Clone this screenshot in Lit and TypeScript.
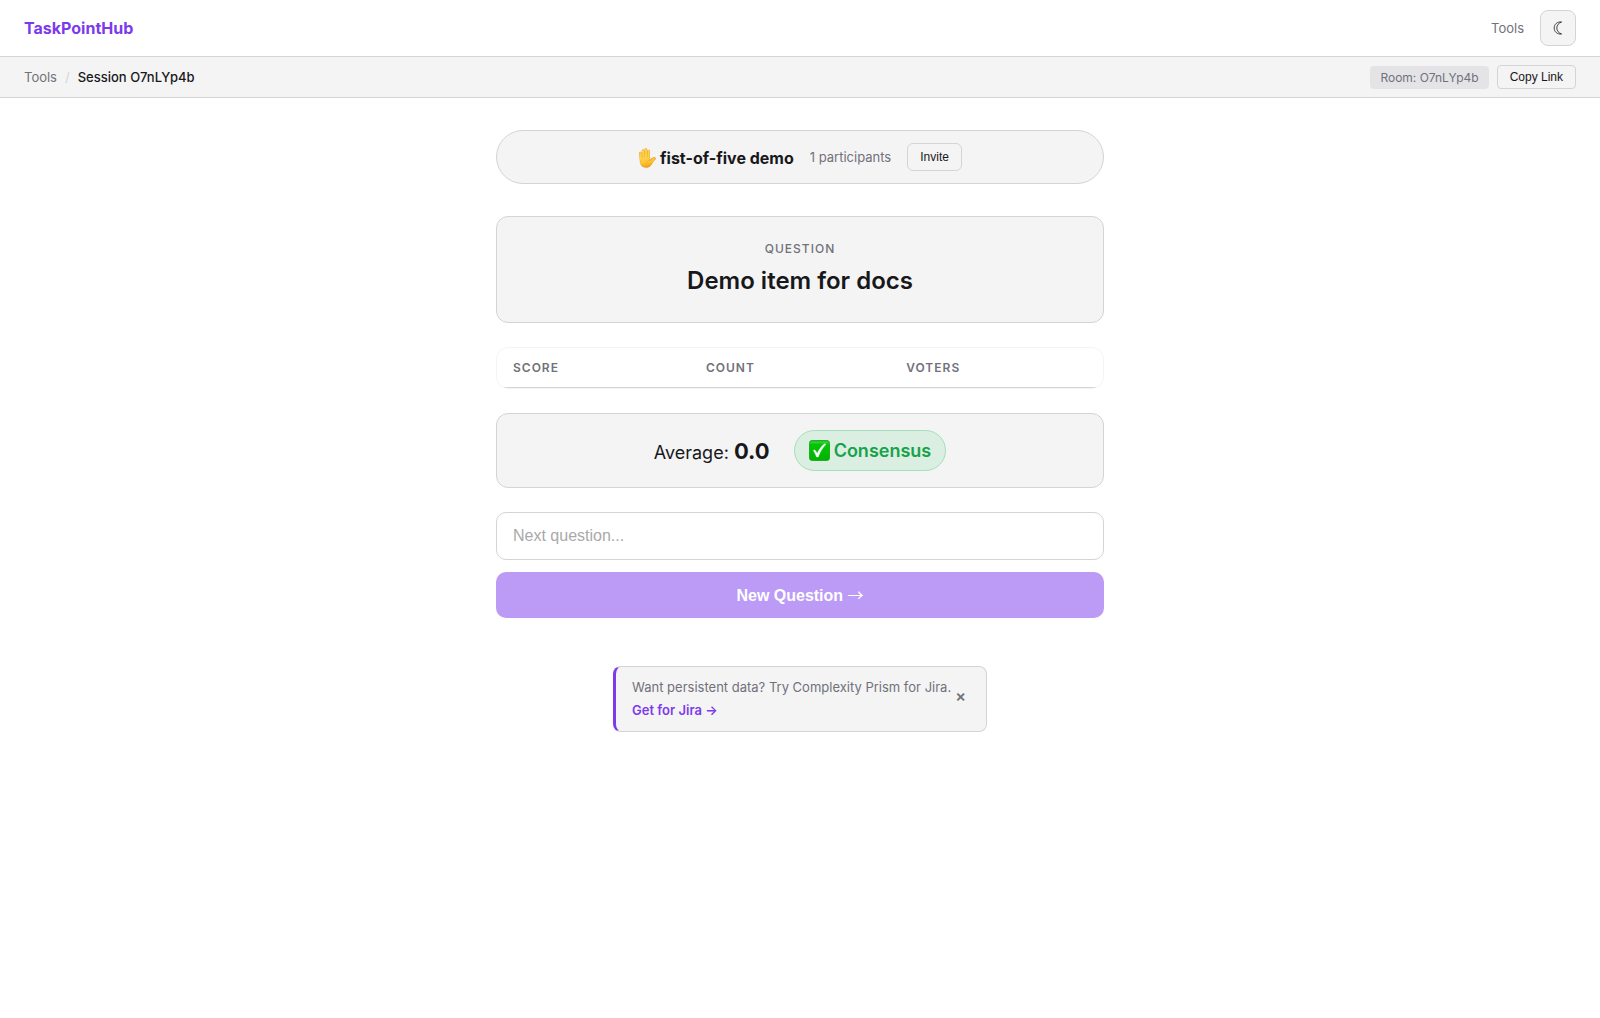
import { LitElement, html, css, svg } from "lit";
import { customElement, property, state } from "lit/decorators.js";

const handIcon = svg`
  <svg class="hand" viewBox="0 0 18 20" aria-hidden="true">
    <defs>
      <linearGradient id="skin" x1="0" y1="0" x2="0.3" y2="1">
        <stop offset="0" stop-color="#ffd24d"></stop>
        <stop offset="0.6" stop-color="#fcc52f"></stop>
        <stop offset="1" stop-color="#f0a01e"></stop>
      </linearGradient>
    </defs>
    <g fill="none" stroke="#e5a02a" stroke-linecap="round">
      <path d="M2.3 5.2 3.2 11M5 2.6 5.6 10M7.9 1.6V10M10.7 3 10.3 10" stroke-width="2.7"></path>
      <path d="M16.4 10.6C14.6 10.6 13.6 12.4 12.2 13.6" stroke-width="2.7"></path>
    </g>
    <path d="M2 9.5 11.6 9.2 12.2 12.4C13.4 11.6 14 10.4 15.4 9.7 16.6 9.2 17.8 9.9 17.3 10.9 15.6 12.6 14.6 15.2 12.8 17.4 11.2 19.6 8.2 19.9 5.6 19.1 2.4 18 1.9 14 2 9.5Z" fill="url(#skin)" stroke="#e09a25" stroke-width="0.5"></path>
    <g fill="none" stroke="#ffd04a" stroke-linecap="round" stroke-width="2.1">
      <path d="M2.3 5.2 3.2 11M5 2.6 5.6 10.5M7.9 1.6V10.5M10.7 3 10.3 10.5"></path>
    </g>
    <path d="M11.8 12C9.8 12.4 8.6 13.8 8.4 15.6" fill="none" stroke="#e9a52a" stroke-width="0.6"></path>
  </svg>`;

const checkIcon = svg`
  <svg class="check" viewBox="0 0 21 21" aria-hidden="true">
    <defs>
      <linearGradient id="leaf" x1="0" y1="0" x2="0" y2="1">
        <stop offset="0" stop-color="#0aa30f"></stop>
        <stop offset="0.08" stop-color="#35d63a"></stop>
        <stop offset="0.2" stop-color="#03c503"></stop>
        <stop offset="1" stop-color="#02b302"></stop>
      </linearGradient>
    </defs>
    <rect x="0.4" y="0.4" width="20.2" height="20.2" rx="3" fill="url(#leaf)" stroke="#0b9a12" stroke-width="0.8"></rect>
    <path d="M4.4 10.4 5.6 9.8C6.8 10.8 7.6 12 8.2 13.4 10 9.6 12.4 6.4 15.4 3.8L17 4.2C13.6 7.6 11 12 9.2 17H7.6C6.8 14.6 5.8 12.4 4.4 10.4Z" fill="#fff" stroke="#fff" stroke-width="0.4" stroke-linejoin="round"></path>
  </svg>`;

@customElement("site-header")
class SiteHeader extends LitElement {
  static styles = css`
    :host { display: block; }
    .bar {
      display: flex; align-items: center; justify-content: space-between;
      height: 56px; padding: 0 24px; border-bottom: 1px solid #d4d4d8; background: #fff;
    }
    a { text-decoration: none; }
    .brand { color: #7c3aed; font-size: 16px; font-weight: 700; }
    .nav { display: flex; align-items: center; gap: 16px; }
    .link { color: #71717a; font-size: 13px; }
    .theme {
      display: flex; align-items: center; justify-content: center; box-sizing: border-box;
      width: 36px; height: 36px; padding: 0; border: 1px solid #d4d4d8; border-radius: 8px;
      background: #f4f4f4; color: #18181b; cursor: pointer;
    }
    .moon { width: 10px; height: 14px; }
  `;
  render() {
    return html`
      <header class="bar">
        <a class="brand" href="#">TaskPointHub</a>
        <nav class="nav">
          <a class="link" href="#tools">Tools</a>
          <button class="theme" type="button" aria-label="Toggle theme">
            <svg class="moon" viewBox="0 0 10 14" aria-hidden="true">
              <path d="M8.6 1C4.4.6 1.2 3 1.2 7S4.4 13.4 8.6 13C5.8 12 3.8 10 3.8 7S5.8 2 8.6 1Z" fill="none" stroke="currentColor" stroke-width="0.8"></path>
            </svg>
          </button>
        </nav>
      </header>`;
  }
}

@customElement("session-bar")
class SessionBar extends LitElement {
  @property() room = "";
  static styles = css`
    :host { display: block; }
    .bar {
      display: flex; align-items: center; justify-content: space-between;
      height: 40px; padding: 0 24px; border-bottom: 1px solid #d4d4d8; background: #f4f4f4;
      font-size: 13px;
    }
    .crumbs, .actions { display: flex; align-items: center; gap: 8px; }
    .link { color: #71717a; text-decoration: none; }
    .sep { color: #d4d4d8; }
    .current { color: #18181b; font-weight: 500; }
    .room {
      padding: 4px 10px; border-radius: 4px; background: #e4e4e7; color: #71717a;
      font-size: 12px; line-height: 15px;
    }
    .copy {
      padding: 4px 12px; border: 1px solid #d4d4d8; border-radius: 4px; background: #f4f4f4;
      color: #18181b; font: 12px/14px "Liberation Sans", Arial, sans-serif; cursor: pointer;
    }
  `;
  render() {
    return html`
      <div class="bar">
        <nav class="crumbs" aria-label="Breadcrumb">
          <a class="link" href="#tools">Tools</a>
          <span class="sep">/</span>
          <span class="current">Session ${this.room}</span>
        </nav>
        <div class="actions">
          <span class="room">Room: ${this.room}</span>
          <button class="copy" type="button">Copy Link</button>
        </div>
      </div>`;
  }
}

@customElement("app-root")
class AppRoot extends LitElement {
  @state() private question = "";
  @state() private promo = true;
  static styles = css`
    :host {
      display: block; min-height: 100vh; background: #fff; color: #18181b;
      font-family: Inter, "Liberation Sans", sans-serif; font-size: 16px;
    }
    .page {
      display: flex; flex-direction: column; box-sizing: border-box;
      max-width: 640px; margin: 0 auto; padding: 32px 16px;
    }
    .card { box-sizing: border-box; border: 1px solid #d4d4d8; border-radius: 12px; background: #f4f4f4; }
    .summary {
      display: flex; align-items: center; justify-content: center; gap: 16px;
      padding: 12px 24px; border-radius: 27px; margin-bottom: 32px;
    }
    .title {
      display: flex; align-items: center; gap: 4px; margin: 0; padding-top: 2px;
      font-size: 16px; font-weight: 700; line-height: 24px;
    }
    .hand { width: 18px; height: 20px; }
    .people { color: #71717a; font-size: 13px; line-height: 20px; }
    .invite {
      padding: 6px 12px; border: 1px solid #d4d4d8; border-radius: 6px; background: #f4f4f4;
      color: #18181b; font: 12px/14px "Liberation Sans", Arial, sans-serif; cursor: pointer;
    }
    .question { padding: 24px; margin-bottom: 24px; text-align: center; }
    .eyebrow { margin: 0 0 6px; color: #71717a; font-size: 12px; font-weight: 500; line-height: 16px; letter-spacing: 1px; }
    .item { margin: 0; font-size: 24px; font-weight: 600; line-height: 35px; }
    .scores {
      width: 100%; border: 1px solid #f4f4f4; border-radius: 12px; border-spacing: 0;
      overflow: hidden; margin-bottom: 24px;
    }
    .scores th {
      padding: 10px 16px; border-bottom: 1px solid #d4d4d8; color: #71717a; text-align: left;
      font-size: 12px; font-weight: 600; line-height: 19px; letter-spacing: 1px;
    }
    .result { display: flex; align-items: center; justify-content: center; gap: 24px; padding: 16px; margin-bottom: 24px; }
    .average { padding-top: 2px; font-size: 18px; line-height: 32px; }
    .value { font-size: 22px; font-weight: 700; }
    .badge {
      display: flex; align-items: center; gap: 4px; padding: 6px 14px; border: 1px solid #a3e0b9; border-radius: 21px;
      background: #dbeee2; color: #16a34a; font-size: 18px; font-weight: 600; line-height: 27px;
    }
    .check { width: 21px; height: 21px; }
    .form { display: flex; flex-direction: column; gap: 12px; margin: 0 0 48px; }
    .field {
      box-sizing: border-box; width: 100%; height: 48px; padding: 0 16px; border: 1px solid #d4d4d8;
      border-radius: 10px; background: #fff; color: #18181b; font: 16px "Liberation Sans", Arial, sans-serif;
    }
    .field::placeholder { color: #a9a9a9; }
    .submit {
      height: 46px; border: 0; border-radius: 10px; background: #bb9bf5; color: #fff;
      font: 600 16px "Liberation Sans", Arial, sans-serif;
    }
    .arrow { font-family: "Noto Sans CJK JP", sans-serif; font-weight: 400; line-height: 16px; }
    .promo {
      display: flex; align-items: center; align-self: center; gap: 4px; padding: 10px 20px 10px 16px;
      border-left: 3px solid #7c3aed; border-radius: 8px;
      font-size: 13px;
    }
    .copy { display: flex; flex-direction: column; gap: 2px; color: #71717a; line-height: 21px; }
    .get { align-self: flex-start; color: #7c3aed; font-weight: 600; text-decoration: none; }
    .close {
      padding: 0 0 6px; border: 0; background: none; color: #71717a; cursor: pointer;
      font: 600 16px/16px Inter, sans-serif;
    }
  `;
  render() {
    return html`
      <site-header></site-header>
      <session-bar room="O7nLYp4b"></session-bar>
      <main class="page">
        <section class="card summary">
          <h1 class="title">${handIcon}<span>fist-of-five demo</span></h1>
          <span class="people">1 participants</span>
          <button class="invite" type="button">Invite</button>
        </section>
        <section class="card question">
          <p class="eyebrow">QUESTION</p>
          <h2 class="item">Demo item for docs</h2>
        </section>
        <table class="scores">
          <thead><tr><th scope="col">SCORE</th><th scope="col">COUNT</th><th scope="col">VOTERS</th></tr></thead>
        </table>
        <section class="card result">
          <span class="average">Average: <strong class="value">0.0</strong></span>
          <span class="badge">${checkIcon}<span>Consensus</span></span>
        </section>
        <form class="form" @submit=${(e: Event) => e.preventDefault()}>
          <input class="field" type="text" aria-label="Next question" placeholder="Next question..."
            .value=${this.question}
            @input=${(e: Event) => { this.question = (e.target as HTMLInputElement).value; }}>
          <button class="submit" type="submit" ?disabled=${!this.question}>New Question <span class="arrow">→</span></button>
        </form>
        ${this.promo ? html`
          <aside class="card promo">
            <div class="copy">
              <span>Want persistent data? Try Complexity Prism for Jira.</span>
              <a class="get" href="#jira">Get for Jira →</a>
            </div>
            <button class="close" type="button" aria-label="Dismiss" @click=${() => { this.promo = false; }}>×</button>
          </aside>` : ""}
      </main>`;
  }
}
